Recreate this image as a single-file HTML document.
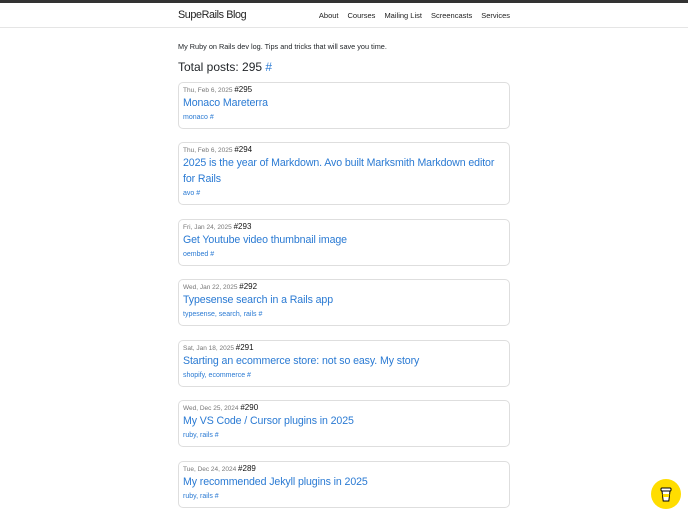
<!DOCTYPE html>
<html><head><meta charset="utf-8"><style>
*{box-sizing:border-box;margin:0;padding:0}
body{width:688px;height:512px;overflow:hidden;background:#fff;font-family:"Liberation Sans",Helvetica,Arial,sans-serif;color:#212529;position:relative}
.top{height:3px;background:#333}
.nav{height:25px;border-bottom:1px solid #e5e5e5;position:relative}
.brand{position:absolute;left:178px;top:6px;font-size:10.8px;color:#222;letter-spacing:-0.4px}
.links{position:absolute;right:178px;top:8px;font-size:7.5px;color:#222}
.links span{margin-left:9px}
.tag{position:absolute;left:178px;top:42px;font-size:7.3px}
.total{position:absolute;left:178px;top:60px;font-size:12px}
a{color:#2a7ad3;text-decoration:none}
.card{position:absolute;left:178px;width:332px;border:1px solid #dedede;border-radius:5px;padding:2px 4px}
.d{font-size:6.5px;color:#777}
.d b{font-weight:normal;color:#111;font-size:8px}
.t{font-size:10.6px;color:#2a7ad3;line-height:16px;margin-top:1px;letter-spacing:-0.1px}
.g{font-size:7px;color:#2a7ad3;margin-top:3px}
.bmc{position:absolute;left:651px;top:479px;width:30px;height:30px;border-radius:50%;background:#fd0;display:flex;align-items:center;justify-content:center}
</style></head><body>
<div class="top"></div>
<div class="nav"><div class="brand">SupeRails Blog</div>
<div class="links"><span>About</span><span>Courses</span><span>Mailing List</span><span>Screencasts</span><span>Services</span></div></div>
<div class="tag">My Ruby on Rails dev log. Tips and tricks that will save you time.</div>
<div class="total">Total posts: 295 <a>#</a></div>

<div class="card" style="top:82px;height:47px"><div class="d">Thu, Feb 6, 2025 <b>#295</b></div><div class="t">Monaco Mareterra</div><div class="g">monaco #</div></div>
<div class="card" style="top:142px;height:63px"><div class="d">Thu, Feb 6, 2025 <b>#294</b></div><div class="t">2025 is the year of Markdown. Avo built Marksmith Markdown editor for Rails</div><div class="g">avo #</div></div>
<div class="card" style="top:219px;height:47px"><div class="d">Fri, Jan 24, 2025 <b>#293</b></div><div class="t">Get Youtube video thumbnail image</div><div class="g">oembed #</div></div>
<div class="card" style="top:279px;height:47px"><div class="d">Wed, Jan 22, 2025 <b>#292</b></div><div class="t">Typesense search in a Rails app</div><div class="g">typesense, search, rails #</div></div>
<div class="card" style="top:340px;height:47px"><div class="d">Sat, Jan 18, 2025 <b>#291</b></div><div class="t">Starting an ecommerce store: not so easy. My story</div><div class="g">shopify, ecommerce #</div></div>
<div class="card" style="top:400px;height:47px"><div class="d">Wed, Dec 25, 2024 <b>#290</b></div><div class="t">My VS Code / Cursor plugins in 2025</div><div class="g">ruby, rails #</div></div>
<div class="card" style="top:461px;height:47px"><div class="d">Tue, Dec 24, 2024 <b>#289</b></div><div class="t">My recommended Jekyll plugins in 2025</div><div class="g">ruby, rails #</div></div>

<div class="bmc"><svg width="12" height="16" viewBox="0 0 12 16"><rect x="1" y="2" width="10" height="3" rx="1" fill="#fff" stroke="#000" stroke-width="1"/><path d="M2 5 L3.2 15 H8.8 L10 5 Z" fill="#fff" stroke="#000" stroke-width="1"/><path d="M2.6 8 H9.4 L9 11 H3 Z" fill="#fd0"/></svg></div>
</body></html>
